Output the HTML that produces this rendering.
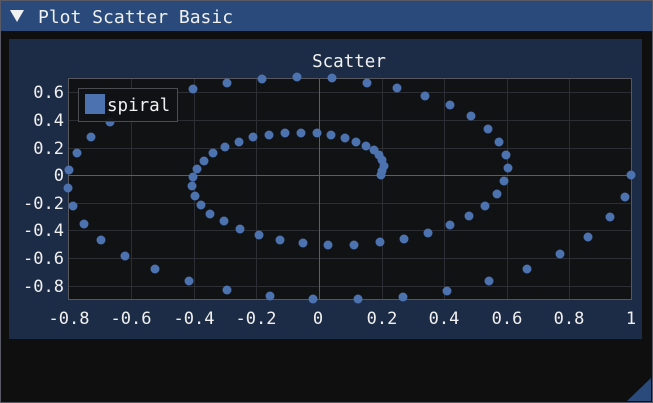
<!DOCTYPE html>
<html><head><meta charset="utf-8"><style>
html,body{margin:0;padding:0;background:#0f0f0f;}
svg{display:block;}
text{font-family:"DejaVu Sans Mono","Liberation Mono",monospace;fill:#f0f0f0;}
</style></head><body>
<svg width="653" height="403" viewBox="0 0 653 403" xmlns="http://www.w3.org/2000/svg">
<rect x="0" y="0" width="653" height="403" fill="#0f0f0f"/>
<rect x="0.5" y="0.5" width="652" height="402" fill="none" stroke="#5a5a66"/>
<rect x="1" y="1" width="651" height="30" fill="#294a7a"/>
<polygon points="10,10 24,10 17,22" fill="#f0f0f0"/>
<text x="38" y="23" font-size="18">Plot Scatter Basic</text>
<rect x="9" y="39" width="633" height="300" fill="#1d2c46"/>
<text x="349" y="67" font-size="17.5" text-anchor="middle">Scatter</text>
<rect x="69" y="78" width="563" height="221" fill="#111214"/>
<g stroke="#2c2e33" stroke-width="1">
<line x1="131.5" y1="78" x2="131.5" y2="299"/><line x1="194.5" y1="78" x2="194.5" y2="299"/>
<line x1="256.5" y1="78" x2="256.5" y2="299"/><line x1="382.5" y1="78" x2="382.5" y2="299"/>
<line x1="444.5" y1="78" x2="444.5" y2="299"/><line x1="507.5" y1="78" x2="507.5" y2="299"/>
<line x1="569.5" y1="78" x2="569.5" y2="299"/>
<line x1="69" y1="92.5" x2="632" y2="92.5"/><line x1="69" y1="120.5" x2="632" y2="120.5"/>
<line x1="69" y1="148.5" x2="632" y2="148.5"/><line x1="69" y1="203.5" x2="632" y2="203.5"/>
<line x1="69" y1="230.5" x2="632" y2="230.5"/><line x1="69" y1="258.5" x2="632" y2="258.5"/>
<line x1="69" y1="286.5" x2="632" y2="286.5"/>
</g>
<g stroke="#5c5e63" stroke-width="1">
<line x1="319.5" y1="78" x2="319.5" y2="299"/>
<line x1="69" y1="175.5" x2="632" y2="175.5"/>
</g>
<rect x="68.5" y="78.5" width="563" height="221" fill="none" stroke="#55575c"/>
<g fill="#4c72b0">
<circle cx="193" cy="89" r="4.5"/><circle cx="227" cy="83" r="4.5"/><circle cx="262" cy="79" r="4.5"/><circle cx="297" cy="77" r="4.5"/><circle cx="332" cy="78" r="4.5"/><circle cx="367" cy="83" r="4.5"/><circle cx="397" cy="88" r="4.5"/><circle cx="425" cy="96" r="4.5"/><circle cx="450" cy="105" r="4.5"/><circle cx="471" cy="116" r="4.5"/><circle cx="488" cy="129" r="4.5"/><circle cx="499" cy="142" r="4.5"/><circle cx="506" cy="155" r="4.5"/><circle cx="508" cy="168" r="4.5"/><circle cx="504" cy="181" r="4.5"/><circle cx="497" cy="194" r="4.5"/><circle cx="485" cy="206" r="4.5"/><circle cx="469" cy="216" r="4.5"/><circle cx="450" cy="225" r="4.5"/><circle cx="428" cy="233" r="4.5"/><circle cx="404" cy="239" r="4.5"/><circle cx="380" cy="242" r="4.5"/><circle cx="354" cy="245" r="4.5"/><circle cx="328" cy="245" r="4.5"/><circle cx="303" cy="243" r="4.5"/><circle cx="280" cy="240" r="4.5"/><circle cx="259" cy="235" r="4.5"/><circle cx="240" cy="229" r="4.5"/><circle cx="224" cy="221" r="4.5"/><circle cx="210" cy="214" r="4.5"/><circle cx="201" cy="205" r="4.5"/><circle cx="195" cy="196" r="4.5"/><circle cx="192" cy="186" r="4.5"/><circle cx="193" cy="177" r="4.5"/><circle cx="197" cy="169" r="4.5"/><circle cx="204" cy="161" r="4.5"/><circle cx="213" cy="153" r="4.5"/><circle cx="225" cy="147" r="4.5"/><circle cx="239" cy="142" r="4.5"/><circle cx="253" cy="137" r="4.5"/><circle cx="269" cy="135" r="4.5"/><circle cx="285" cy="133" r="4.5"/><circle cx="301" cy="133" r="4.5"/><circle cx="317" cy="133" r="4.5"/><circle cx="331" cy="135" r="4.5"/><circle cx="345" cy="138" r="4.5"/><circle cx="356" cy="142" r="4.5"/><circle cx="366" cy="146" r="4.5"/><circle cx="374" cy="150" r="4.5"/><circle cx="379" cy="155" r="4.5"/><circle cx="382" cy="160" r="4.5"/><circle cx="384" cy="166" r="4.5"/><circle cx="382" cy="171" r="4.5"/><circle cx="381" cy="175" r="4.5"/>
<circle cx="110" cy="122" r="4.5"/><circle cx="91" cy="137" r="4.5"/><circle cx="77" cy="153" r="4.5"/><circle cx="69" cy="170" r="4.5"/><circle cx="68" cy="188" r="4.5"/><circle cx="73" cy="206" r="4.5"/><circle cx="84" cy="224" r="4.5"/><circle cx="101" cy="240" r="4.5"/><circle cx="125" cy="256" r="4.5"/><circle cx="155" cy="269" r="4.5"/><circle cx="189" cy="281" r="4.5"/><circle cx="227" cy="290" r="4.5"/><circle cx="270" cy="296" r="4.5"/><circle cx="313" cy="299" r="4.5"/><circle cx="358" cy="299" r="4.5"/><circle cx="403" cy="297" r="4.5"/><circle cx="447" cy="291" r="4.5"/><circle cx="489" cy="281" r="4.5"/><circle cx="527" cy="269" r="4.5"/><circle cx="560" cy="254" r="4.5"/><circle cx="588" cy="237" r="4.5"/><circle cx="610" cy="217" r="4.5"/><circle cx="625" cy="197" r="4.5"/><circle cx="631" cy="175" r="4.5"/>
</g>
<rect x="78.5" y="88.5" width="99" height="33" fill="#111214" fill-opacity="0.95" stroke="#4a4c52"/>
<rect x="85" y="94" width="20" height="20" fill="#4c72b0"/>
<text x="107" y="111" font-size="17.5">spiral</text>
<g font-size="17" text-anchor="end">
<text x="64" y="98">0.6</text><text x="64" y="126">0.4</text><text x="64" y="154">0.2</text><text x="64" y="181">0</text>
<text x="64" y="209">-0.2</text><text x="64" y="236">-0.4</text><text x="64" y="264">-0.6</text><text x="64" y="292">-0.8</text>
</g>
<g font-size="17" text-anchor="middle">
<text x="69" y="324">-0.8</text><text x="131" y="324">-0.6</text><text x="194" y="324">-0.4</text><text x="256" y="324">-0.2</text>
<text x="318" y="324">0</text><text x="382" y="324">0.2</text><text x="444" y="324">0.4</text><text x="507" y="324">0.6</text>
<text x="569" y="324">0.8</text><text x="631" y="324">1</text>
</g>
<polygon points="651,378 651,401 627,401" fill="#294a7a"/>
</svg>
</body></html>
